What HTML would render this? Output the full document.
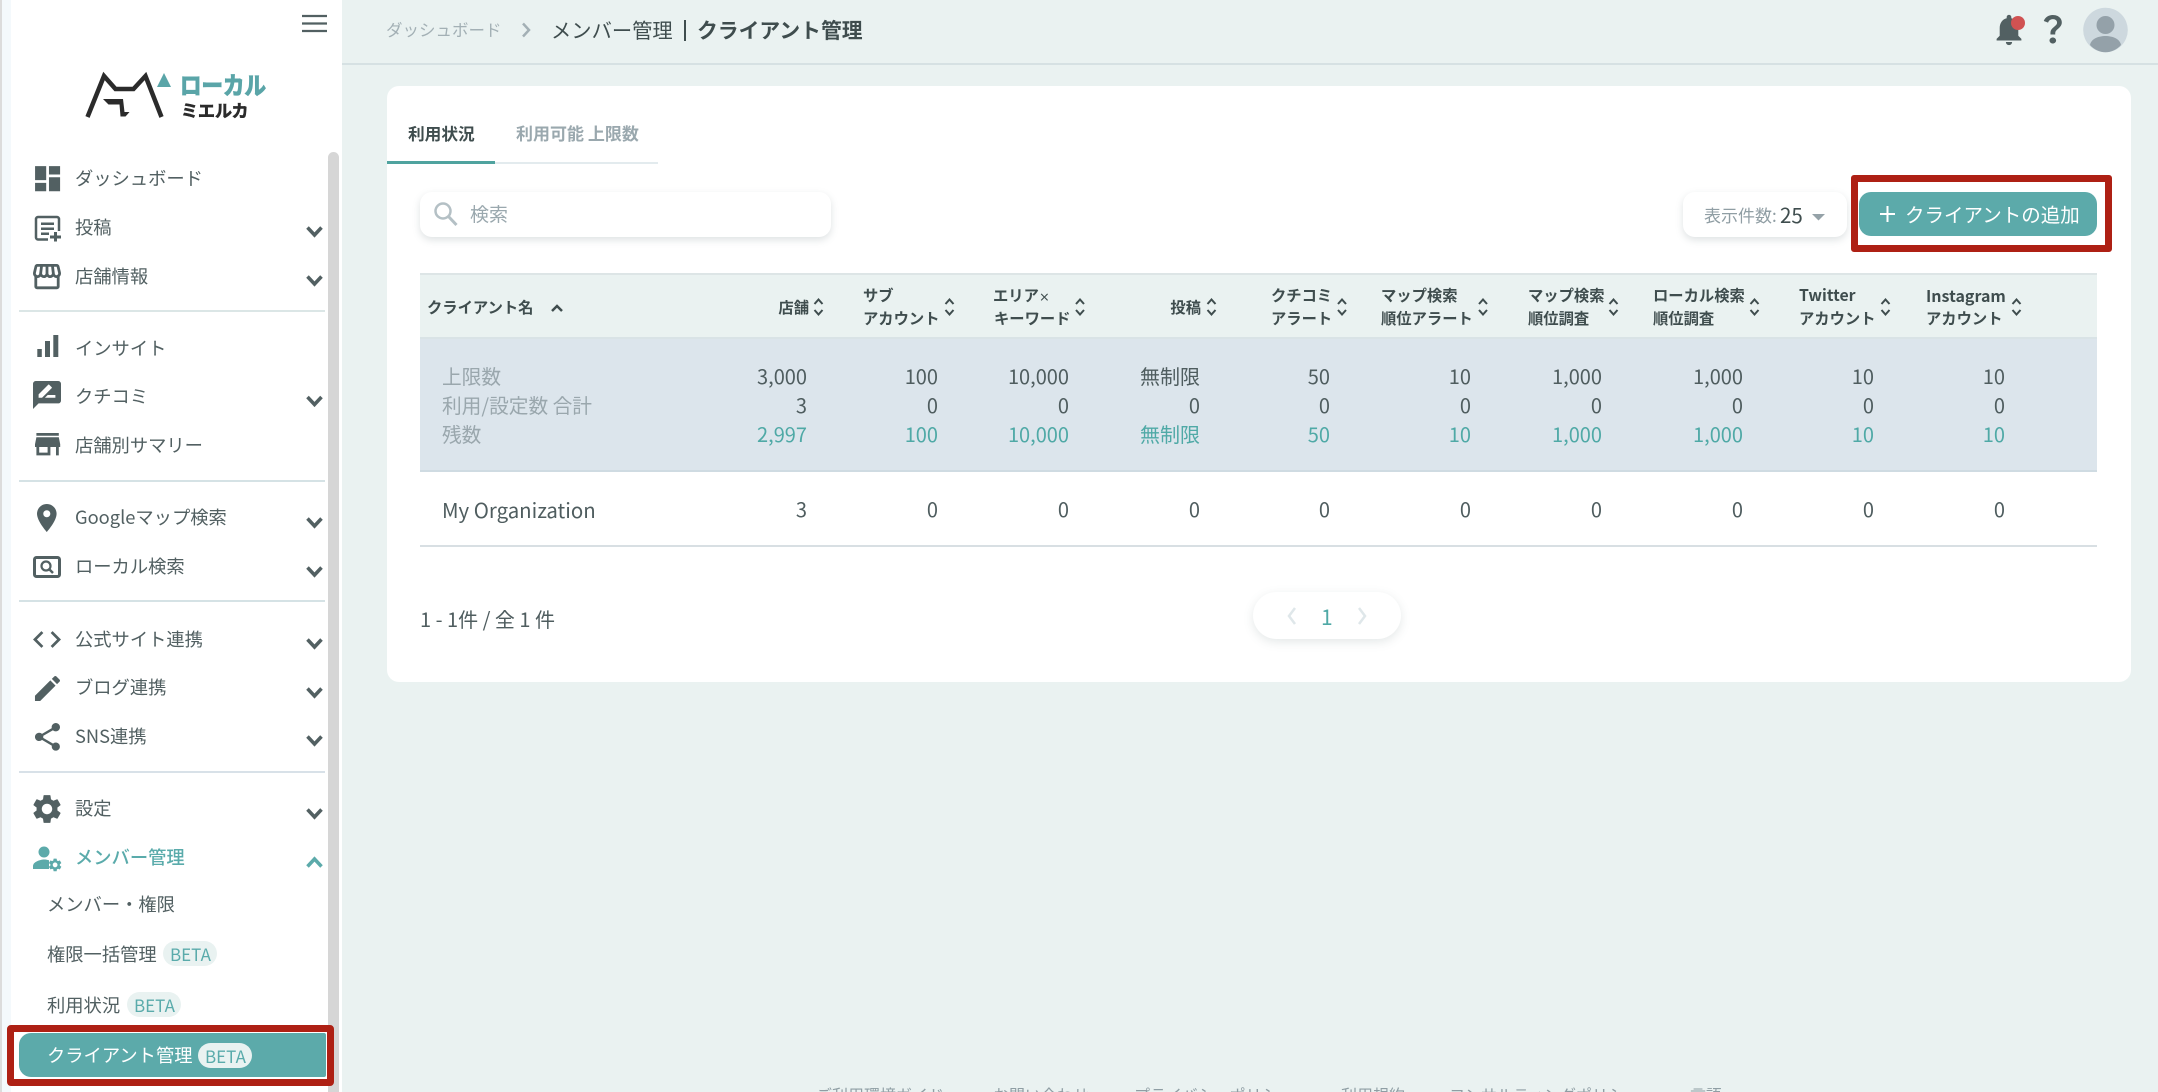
<!DOCTYPE html>
<html lang="ja"><head><meta charset="utf-8"><title>クライアント管理</title>
<style>
html,body{margin:0;padding:0;width:2158px;height:1092px;overflow:hidden;background:#eaf2f1}
body{position:relative;font-family:"Noto Sans CJK JP","Liberation Sans",sans-serif;color:#4f5d5f}
.b{position:absolute;box-sizing:border-box}
.t{position:absolute;white-space:nowrap;line-height:30px;height:30px;font-size:18px}
.r{transform:translateX(-100%)}
.n{font-size:18.3px;color:#526062}
.h{font-size:15.3px;font-weight:700;color:#3f4d4e}
.d{font-size:20px;color:#4f5d5f}
.g{color:#4fa9a6}
.m{font-size:19.7px;color:#9aa7ad}
.f{font-size:16px;color:#8f9ea4;top:1079px}
svg{position:absolute;left:0;top:0}
</style></head><body>
<div class="b" style="left:0;top:0;width:2px;height:1092px;background:#dcdcdc"></div>
<div class="b" style="left:2px;top:0;width:9px;height:1092px;background:#f4f9fc"></div>
<div class="b" style="left:11px;top:0;width:331px;height:1092px;background:#fff"></div>
<div class="b" style="left:328px;top:152px;width:11px;height:940px;background:#d6d6d6;border-radius:6px 6px 0 0"></div>
<div class="b" style="left:342px;top:63px;width:1816px;height:2px;background:#d6e1e3"></div>

<div class="b" style="left:19px;top:310px;width:306px;height:2px;background:#dbe6e6"></div>
<div class="b" style="left:19px;top:480px;width:306px;height:1.5px;background:#d5e2e5"></div>
<div class="b" style="left:19px;top:600px;width:306px;height:1.5px;background:#d5e2e5"></div>
<div class="b" style="left:19px;top:771px;width:306px;height:1.5px;background:#d8e1e8"></div>

<!-- logo text -->
<div class="t" style="left:180px;top:70px;font-size:21.5px;font-weight:700;color:#5aa5a8;-webkit-text-stroke:1px #5aa5a8;line-height:30px;transform:scaleY(1.12);transform-origin:left center">ローカル</div>
<div class="t" style="left:181px;top:95px;font-size:17px;font-weight:700;color:#2b2b2b;-webkit-text-stroke:.6px #2b2b2b">ミエルカ</div>

<!-- sidebar -->
<div class="t n" style="left:75px;top:163px">ダッシュボード</div>
<div class="t n" style="left:75px;top:212px">投稿</div>
<div class="t n" style="left:75px;top:261px">店舗情報</div>
<div class="t n" style="left:75px;top:333px">インサイト</div>
<div class="t n" style="left:75px;top:381px">クチコミ</div>
<div class="t n" style="left:75px;top:430px">店舗別サマリー</div>
<div class="t n" style="left:75px;top:502px">Googleマップ検索</div>
<div class="t n" style="left:75px;top:551px">ローカル検索</div>
<div class="t n" style="left:75px;top:624px">公式サイト連携</div>
<div class="t n" style="left:75px;top:672px">ブログ連携</div>
<div class="t n" style="left:75px;top:721px">SNS連携</div>
<div class="t n" style="left:75px;top:793px">設定</div>
<div class="t n" style="left:75px;top:841.500px;color:#5aabab;font-weight:500">メンバー管理</div>
<div class="t n" style="left:47px;top:888.500px">メンバー・権限</div>
<div class="t n" style="left:47px;top:939px">権限一括管理</div>
<div class="b" style="left:163px;top:941px;width:54px;height:25px;border-radius:13px;background:#e9f2f1"></div>
<div class="t" style="left:170px;top:939px;font-size:17px;color:#5aabab">BETA</div>
<div class="t n" style="left:47px;top:990px">利用状況</div>
<div class="b" style="left:127px;top:992px;width:54px;height:25px;border-radius:13px;background:#e9f2f1"></div>
<div class="t" style="left:134px;top:990px;font-size:17px;color:#5aabab">BETA</div>

<div class="b" style="left:7px;top:1025px;width:327px;height:61px;background:#fff;border:7px solid #ae2014;border-radius:4px"></div>
<div class="b" style="left:19px;top:1033px;width:307px;height:44px;background:#5caaaa;border-radius:12px 2px 2px 12px"></div>
<div class="t" style="left:47px;top:1040px;color:#fff;font-size:18.300px">クライアント管理</div>
<div class="b" style="left:198px;top:1043px;width:54px;height:25px;border-radius:13px;background:#e9f2f1"></div>
<div class="t" style="left:205px;top:1041px;font-size:17px;color:#5aabab">BETA</div>

<!-- header -->
<div class="t" style="left:386px;top:14px;font-size:16.500px;color:#a3b0b5">ダッシュボード</div>
<div class="t" style="left:551px;top:14px;font-size:20.300px;color:#3f4d4e">メンバー管理</div>
<div class="b" style="left:684px;top:20px;width:1.500px;height:21px;background:#3f4d4e"></div>
<div class="t" style="left:697px;top:14px;font-size:20.800px;font-weight:700;color:#3f4d4e">クライアント管理</div>

<!-- card -->
<div class="b" style="left:387px;top:86px;width:1744px;height:596px;background:#fff;border-radius:12px"></div>
<div class="t" style="left:408px;top:118px;font-size:16.700px;font-weight:700;color:#3f4d4e">利用状況</div>
<div class="t" style="left:516px;top:118px;font-size:17px;font-weight:700;color:#9aa8ae">利用可能 上限数</div>
<div class="b" style="left:495px;top:162px;width:163px;height:2px;background:#e3ebee"></div>
<div class="b" style="left:387px;top:161px;width:108px;height:3px;background:#4fa39f"></div>

<div class="b" style="left:420px;top:192px;width:411px;height:45px;background:#fff;border-radius:12px;box-shadow:0 3px 8px rgba(90,110,115,.2)"></div>
<div class="t" style="left:470px;top:199px;font-size:19px;color:#9aa8ae">検索</div>

<div class="b" style="left:1683px;top:192px;width:164px;height:45px;background:#fff;border-radius:12px;box-shadow:0 3px 8px rgba(90,110,115,.2)"></div>
<div class="t" style="left:1704px;top:200px;font-size:17px;color:#909ea4">表示件数:</div>
<div class="t" style="left:1780px;top:199px;font-size:20.500px;color:#3f4d4e">25</div>

<div class="b" style="left:1851px;top:175px;width:261px;height:77px;background:#fff;border:7px solid #ae2014;border-radius:3px"></div>
<div class="b" style="left:1859px;top:192px;width:238px;height:44px;background:#5caaaa;border-radius:12px"></div>
<div class="t" style="left:1905px;top:199px;font-size:19.500px;color:#fff">クライアントの追加</div>

<!-- table -->
<div class="b" style="left:420px;top:273px;width:1677px;height:66px;background:#eaf2f1;border-top:2px solid #dde5e6;border-bottom:2px solid #d9e3e6"></div>
<div class="b" style="left:420px;top:339px;width:1677px;height:133px;background:#dce5ec;border-bottom:2px solid #cfdbe2"></div>
<div class="b" style="left:420px;top:545px;width:1677px;height:2px;background:#d8dfe3"></div>

<div class="t h" style="left:427px;top:292px">クライアント名</div>
<div class="t h r" style="left:809px;top:292px">店舗</div>
<div class="t h" style="left:863px;top:280px">サブ</div><div class="t h" style="left:863px;top:303px">アカウント</div>
<div class="t h" style="left:993px;top:280px">エリア<span style="font-size:11px">×</span></div><div class="t h" style="left:994px;top:303px">キーワード</div>
<div class="t h r" style="left:1201px;top:292px">投稿</div>
<div class="t h" style="left:1271px;top:280px">クチコミ</div><div class="t h" style="left:1271px;top:303px">アラート</div>
<div class="t h" style="left:1381px;top:280px">マップ検索</div><div class="t h" style="left:1381px;top:303px">順位アラート</div>
<div class="t h" style="left:1528px;top:280px">マップ検索</div><div class="t h" style="left:1528px;top:303px">順位調査</div>
<div class="t h" style="left:1653px;top:280px">ローカル検索</div><div class="t h" style="left:1653px;top:303px">順位調査</div>
<div class="t h" style="left:1799px;top:280px;font-size:15.800px">Twitter</div><div class="t h" style="left:1799px;top:303px">アカウント</div>
<div class="t h" style="left:1926px;top:280px;font-size:16px">Instagram</div><div class="t h" style="left:1926px;top:303px">アカウント</div>

<div class="t m" style="left:442px;top:360.500px">上限数</div>
<div class="t m" style="left:442px;top:390px">利用/設定数 合計</div>
<div class="t m" style="left:442px;top:419px">残数</div>
<div class="t d" style="left:442px;top:494px;font-size:20.400px">My Organization</div>

<div class="t d r" style="left:807px;top:360.500px">3,000</div><div class="t d r" style="left:807px;top:390px">3</div><div class="t d r g" style="left:807px;top:419px">2,997</div><div class="t d r" style="left:807px;top:494px">3</div>
<div class="t d r" style="left:938px;top:360.500px">100</div><div class="t d r" style="left:938px;top:390px">0</div><div class="t d r g" style="left:938px;top:419px">100</div><div class="t d r" style="left:938px;top:494px">0</div>
<div class="t d r" style="left:1069px;top:360.500px">10,000</div><div class="t d r" style="left:1069px;top:390px">0</div><div class="t d r g" style="left:1069px;top:419px">10,000</div><div class="t d r" style="left:1069px;top:494px">0</div>
<div class="t d r" style="left:1200px;top:360.500px">無制限</div><div class="t d r" style="left:1200px;top:390px">0</div><div class="t d r g" style="left:1200px;top:419px">無制限</div><div class="t d r" style="left:1200px;top:494px">0</div>
<div class="t d r" style="left:1330px;top:360.500px">50</div><div class="t d r" style="left:1330px;top:390px">0</div><div class="t d r g" style="left:1330px;top:419px">50</div><div class="t d r" style="left:1330px;top:494px">0</div>
<div class="t d r" style="left:1471px;top:360.500px">10</div><div class="t d r" style="left:1471px;top:390px">0</div><div class="t d r g" style="left:1471px;top:419px">10</div><div class="t d r" style="left:1471px;top:494px">0</div>
<div class="t d r" style="left:1602px;top:360.500px">1,000</div><div class="t d r" style="left:1602px;top:390px">0</div><div class="t d r g" style="left:1602px;top:419px">1,000</div><div class="t d r" style="left:1602px;top:494px">0</div>
<div class="t d r" style="left:1743px;top:360.500px">1,000</div><div class="t d r" style="left:1743px;top:390px">0</div><div class="t d r g" style="left:1743px;top:419px">1,000</div><div class="t d r" style="left:1743px;top:494px">0</div>
<div class="t d r" style="left:1874px;top:360.500px">10</div><div class="t d r" style="left:1874px;top:390px">0</div><div class="t d r g" style="left:1874px;top:419px">10</div><div class="t d r" style="left:1874px;top:494px">0</div>
<div class="t d r" style="left:2005px;top:360.500px">10</div><div class="t d r" style="left:2005px;top:390px">0</div><div class="t d r g" style="left:2005px;top:419px">10</div><div class="t d r" style="left:2005px;top:494px">0</div>

<!-- pagination -->
<div class="t" style="left:420px;top:604px;font-size:20px;color:#4f5d5f">1 - 1件 / 全 1 件</div>
<div class="b" style="left:1253px;top:592px;width:148px;height:47px;background:#fff;border-radius:24px;box-shadow:0 3px 10px rgba(90,110,115,.16)"></div>
<div class="t" style="left:1321px;top:602px;font-size:21px;color:#4fa9a6">1</div>

<!-- footer -->
<div class="t f" style="left:816px">ご利用環境ガイド</div>
<div class="t f" style="left:993px">お問い合わせ</div>
<div class="t f" style="left:1134px">プライバシーポリシー</div>
<div class="t f" style="left:1341px">利用規約</div>
<div class="t f" style="left:1449px">コンサルティングポリシー</div>
<div class="t f" style="left:1690px">言語</div>

<svg width="2158" height="1092" viewBox="0 0 2158 1092" fill="none">
<!-- hamburger -->
<path d="M302 16h25M302 23.500h25M302 31h25" stroke="#526062" stroke-width="2.200"/>
<!-- logo -->
<path d="M87.500 117 104 76 115.500 89H133.500L145.500 76 161.500 117" stroke="#2b2b2b" stroke-width="4.500" stroke-linejoin="miter"/>
<path d="M103 99h20l1.500 13h5l-4 4.500h-5l-1-12h-11z" fill="#2b2b2b"/>
<path d="M157 87h14l-7-14z" fill="#5aa5a8"/>
<g fill="#526062">
<path transform="translate(30.900 162) scale(1.39)" d="M3 13h8V3H3v10zm0 8h8v-6H3v6zm10 0h8V11h-8v10zm0-18v6h8V3h-8z"/>
<path d="M48 239.500H38a2 2 0 0 1-2-2V219a2 2 0 0 1 2-2H57a2 2 0 0 1 2 2V231" fill="none" stroke="#526062" stroke-width="2.500"/>
<path d="M41 222.500h13v2.500H41zM41 227.500h13v2.500H41zM41 232.500h8v2.500H41zM54 232h3v3.500h4v3h-4v3h-3v-3h-4v-3h4z"/>
<path transform="translate(30.200 259.800) scale(1.4)" d="M21.900 8.890l-1.050-4.370c-.22-.9-1-1.520-1.910-1.520H5.050c-.9 0-1.690.63-1.900 1.520L2.100 8.890c-.24 1.020-.02 2.060.62 2.880.08.11.19.19.28.29V19c0 1.100.9 2 2 2h14c1.100 0 2-.9 2-2v-6.940c.09-.09.2-.18.28-.28.64-.82.87-1.870.62-2.890zm-2.990-3.900l1.050 4.370c.1.42.01.84-.25 1.170-.14.18-.44.47-.94.47-.61 0-1.140-.49-1.210-1.140L16.980 5l1.930-.01zM13 5h1.960l.54 4.520c.05.39-.07.78-.33 1.070-.22.26-.54.41-.95.41-.67 0-1.220-.59-1.220-1.310V5zM8.490 9.520L9.040 5H11v4.690c0 .72-.55 1.310-1.290 1.310-.34 0-.65-.15-.89-.41-.25-.29-.37-.68-.33-1.070zm-4.450-.16L5.050 5h1.970l-.58 4.860c-.08.65-.6 1.140-1.210 1.140-.49 0-.8-.29-.93-.47-.27-.32-.36-.75-.26-1.170zM5 19v-6.030c.08.01.15.03.23.03.87 0 1.660-.36 2.240-.95.6.6 1.400.95 2.310.95.87 0 1.650-.36 2.230-.93.59.57 1.390.93 2.290.93.84 0 1.640-.35 2.240-.95.58.59 1.370.95 2.240.95.08 0 .15-.02.23-.03V19H5z"/>
<path d="M37.300 349h4.500v8h-4.500zM45 341h5v16h-5zM53.300 335h5v22h-5z"/>
<path transform="translate(30.200 378.200) scale(1.4)" d="M20 2H4c-1.100 0-1.990.9-1.990 2L2 22l4-4h14c1.100 0 2-.9 2-2V4c0-1.100-.9-2-2-2zM6 14v-2.470l6.880-6.880c.2-.2.51-.2.71 0l1.770 1.770c.2.2.2.51 0 .71L8.470 14H6zm12 0h-7.500l2-2H18v2z"/>
<path transform="translate(30.800 427.400) scale(1.4)" d="M20 4H4v2h16V4zm1 10v-2l-1-5H4l-1 5v2h1v6h10v-6h4v6h2v-6h1zm-9 4H6v-4h6v4z"/>
<path transform="translate(30 501.200) scale(1.4)" d="M12 2C8.130 2 5 5.130 5 9c0 5.250 7 13 7 13s7-7.750 7-13c0-3.870-3.130-7-7-7zm0 9.500c-1.380 0-2.500-1.120-2.500-2.500s1.120-2.500 2.500-2.500 2.500 1.120 2.500 2.500-1.120 2.500-2.500 2.500z"/>
<rect x="34.500" y="557.500" width="25" height="19" rx="2" fill="none" stroke="#526062" stroke-width="3"/>
<circle cx="46" cy="566" r="4.500" fill="none" stroke="#526062" stroke-width="2.200"/>
<path d="M49 569l4 4" stroke="#526062" stroke-width="2.500"/>
<path transform="translate(30.200 622.700) scale(1.4)" d="M9.400 16.600L4.800 12l4.600-4.600L8 6l-6 6 6 6 1.400-1.400zm5.200 0l4.600-4.600-4.600-4.600L16 6l6 6-6 6-1.400-1.400z"/>
<path transform="translate(30.800 671.800) scale(1.39)" d="M3 17.250V21h3.750L17.810 9.940l-3.750-3.750L3 17.250zM20.710 7.040c.39-.39.39-1.020 0-1.410l-2.340-2.340c-.39-.39-1.020-.39-1.410 0l-1.830 1.830 3.750 3.750 1.830-1.830z"/>
<path transform="translate(30.800 720.200) scale(1.39)" d="M18 16.080c-.76 0-1.440.3-1.960.77L8.910 12.700c.05-.23.09-.46.09-.7s-.04-.47-.09-.7l7.050-4.110c.54.5 1.250.81 2.040.81 1.660 0 3-1.340 3-3s-1.340-3-3-3-3 1.340-3 3c0 .24.04.47.09.7L8.040 9.810C7.500 9.310 6.790 9 6 9c-1.660 0-3 1.340-3 3s1.340 3 3 3c.79 0 1.500-.31 2.040-.81l7.120 4.160c-.05.21-.08.43-.08.65 0 1.610 1.310 2.920 2.920 2.920 1.610 0 2.920-1.310 2.920-2.920s-1.310-2.920-2.920-2.920z"/>
<path transform="translate(29.600 791.600) scale(1.45)" d="M19.140 12.940c.04-.3.06-.61.06-.94 0-.32-.02-.64-.07-.94l2.030-1.580c.18-.14.23-.41.12-.61l-1.920-3.320c-.12-.22-.37-.29-.59-.22l-2.390.96c-.5-.38-1.030-.7-1.620-.94l-.36-2.540c-.04-.24-.24-.41-.48-.41h-3.840c-.24 0-.43.17-.47.41l-.36 2.540c-.59.24-1.130.57-1.620.94l-2.390-.96c-.22-.08-.47 0-.59.22L2.740 8.870c-.12.21-.08.47.12.61l2.030 1.580c-.05.3-.09.63-.09.94s.02.64.07.94l-2.030 1.580c-.18.14-.23.41-.12.61l1.920 3.320c.12.22.37.29.59.22l2.390-.96c.5.38 1.030.7 1.620.94l.36 2.540c.05.24.24.41.48.41h3.840c.24 0 .44-.17.47-.41l.36-2.540c.59-.24 1.130-.56 1.620-.94l2.390.96c.22.08.47 0 .59-.22l1.920-3.320c.12-.22.07-.47-.12-.61l-2.010-1.580zM12 15.600c-1.980 0-3.600-1.620-3.600-3.600s1.620-3.600 3.600-3.600 3.600 1.620 3.600 3.600-1.620 3.600-3.600 3.600z"/>
</g>
<!-- chevrons -->
<g stroke="#526062" stroke-width="3.500">
<path d="M307.500 227.500l7 7.500 7-7.500M307.500 276.500l7 7.500 7-7.500M307.500 397l7 7.500 7-7.500M307.500 518.500l7 7.500 7-7.500M307.500 567.500l7 7.500 7-7.500M307.500 639.500l7 7.500 7-7.500M307.500 688.500l7 7.500 7-7.500M307.500 736.500l7 7.500 7-7.500M307.500 809.500l7 7.500 7-7.500"/>
</g>
<path d="M307.500 866.500l7-7.500 7 7.500" stroke="#5caaaa" stroke-width="3.500"/>
<!-- manage accounts -->
<g fill="#5caaaa">
<circle cx="44" cy="852" r="5.500"/>
<path d="M33 869v-3c0-4 7-6.500 11-6.500 2 0 3.500.3 5 .8V869z"/>
<path transform="translate(47.200 857) scale(.66)" d="M19.140 12.940c.04-.3.06-.61.06-.94 0-.32-.02-.64-.07-.94l2.030-1.580c.18-.14.23-.41.12-.61l-1.920-3.320c-.12-.22-.37-.29-.59-.22l-2.390.96c-.5-.38-1.030-.7-1.620-.94l-.36-2.540c-.04-.24-.24-.41-.48-.41h-3.840c-.24 0-.43.17-.47.41l-.36 2.540c-.59.24-1.130.57-1.620.94l-2.390-.96c-.22-.08-.47 0-.59.22L2.740 8.870c-.12.21-.08.47.12.61l2.030 1.580c-.05.3-.09.63-.09.94s.02.64.07.94l-2.030 1.580c-.18.14-.23.41-.12.61l1.920 3.320c.12.22.37.29.59.22l2.390-.96c.5.38 1.030.7 1.620.94l.36 2.540c.05.24.24.41.48.41h3.840c.24 0 .44-.17.47-.41l.36-2.540c.59-.24 1.130-.56 1.620-.94l2.390.96c.22.08.47 0 .59-.22l1.920-3.320c.12-.22.07-.47-.12-.61l-2.010-1.580zM12 15.600c-1.980 0-3.600-1.620-3.600-3.600s1.620-3.600 3.600-3.600 3.600 1.620 3.600 3.600-1.620 3.600-3.600 3.600z"/>
</g>
<!-- header -->
<path d="M523 23.500l6 6.500-6 6.500" stroke="#a3b0b5" stroke-width="2.500"/>
<path transform="translate(1990.400 11) scale(1.55)" fill="#526062" d="M12 22c1.100 0 2-.9 2-2h-4c0 1.100.89 2 2 2zm6-6v-5c0-3.070-1.640-5.640-4.500-6.320V4c0-.83-.67-1.500-1.500-1.500s-1.500.67-1.500 1.500v.68C7.630 5.360 6 7.920 6 11v5l-2 2v1h16v-1l-2-2z"/>
<circle cx="2018" cy="23" r="7" fill="#d05252"/>
<path transform="translate(2033 10.500) scale(1.65 1.5)" fill="#526062" d="M11.070 12.850c.77-1.390 2.250-2.210 3.110-3.440.91-1.290.4-3.700-2.180-3.700-1.690 0-2.520 1.280-2.870 2.340L6.540 6.960C7.250 4.830 9.180 3 11.990 3c2.350 0 3.960 1.070 4.780 2.410.7 1.150 1.110 3.300.03 4.900-1.200 1.770-2.350 2.310-2.970 3.450-.25.46-.35.76-.35 2.240h-2.890c-.01-.78-.13-2.050.48-3.150zM14 20c0 1.100-.9 2-2 2s-2-.9-2-2 .9-2 2-2 2 .9 2 2z"/>
<circle cx="2105.500" cy="30" r="22.300" fill="#cdd8de"/>
<circle cx="2105.500" cy="25" r="9" fill="#94a1a9"/>
<path d="M2090 45c1-6 8-9 15.500-9s14.500 3 15.500 9c-4 4.500-9.500 7.200-15.500 7.200S2094 49.500 2090 45z" fill="#94a1a9"/>
<!-- search -->
<circle cx="443" cy="211" r="7.500" stroke="#b4c0c5" stroke-width="2.500"/>
<path d="M448.500 216.500l8 8.500" stroke="#b4c0c5" stroke-width="3"/>
<!-- select caret -->
<path d="M1812 214h13l-6.500 6.500z" fill="#95a2a8"/>
<!-- plus -->
<path d="M1887.500 206v16M1880 214h15" stroke="#fff" stroke-width="2"/>
<!-- table sort -->
<path d="M552 311l5-5 5 5" stroke="#3f4d4e" stroke-width="2.500"/>
<g stroke="#3f4d4e" stroke-width="2">
<path d="M814.500 304l4-4.500 4 4.500M814.500 310l4 4.500 4-4.500"/>
<path d="M945.500 304l4-4.500 4 4.500M945.500 310l4 4.500 4-4.500"/>
<path d="M1076 304l4-4.500 4 4.500M1076 310l4 4.500 4-4.500"/>
<path d="M1207.500 304l4-4.500 4 4.500M1207.500 310l4 4.500 4-4.500"/>
<path d="M1338 304l4-4.500 4 4.500M1338 310l4 4.500 4-4.500"/>
<path d="M1479 304l4-4.500 4 4.500M1479 310l4 4.500 4-4.500"/>
<path d="M1609.500 304l4-4.500 4 4.500M1609.500 310l4 4.500 4-4.500"/>
<path d="M1750.500 304l4-4.500 4 4.500M1750.500 310l4 4.500 4-4.500"/>
<path d="M1881.500 304l4-4.500 4 4.500M1881.500 310l4 4.500 4-4.500"/>
<path d="M2012.500 304l4-4.500 4 4.500M2012.500 310l4 4.500 4-4.500"/>
</g>
<!-- pager -->
<path d="M1295 608l-6 8 6 8M1359 608l6 8-6 8" stroke="#dfe7ea" stroke-width="2.500"/>
</svg>
</body></html>
